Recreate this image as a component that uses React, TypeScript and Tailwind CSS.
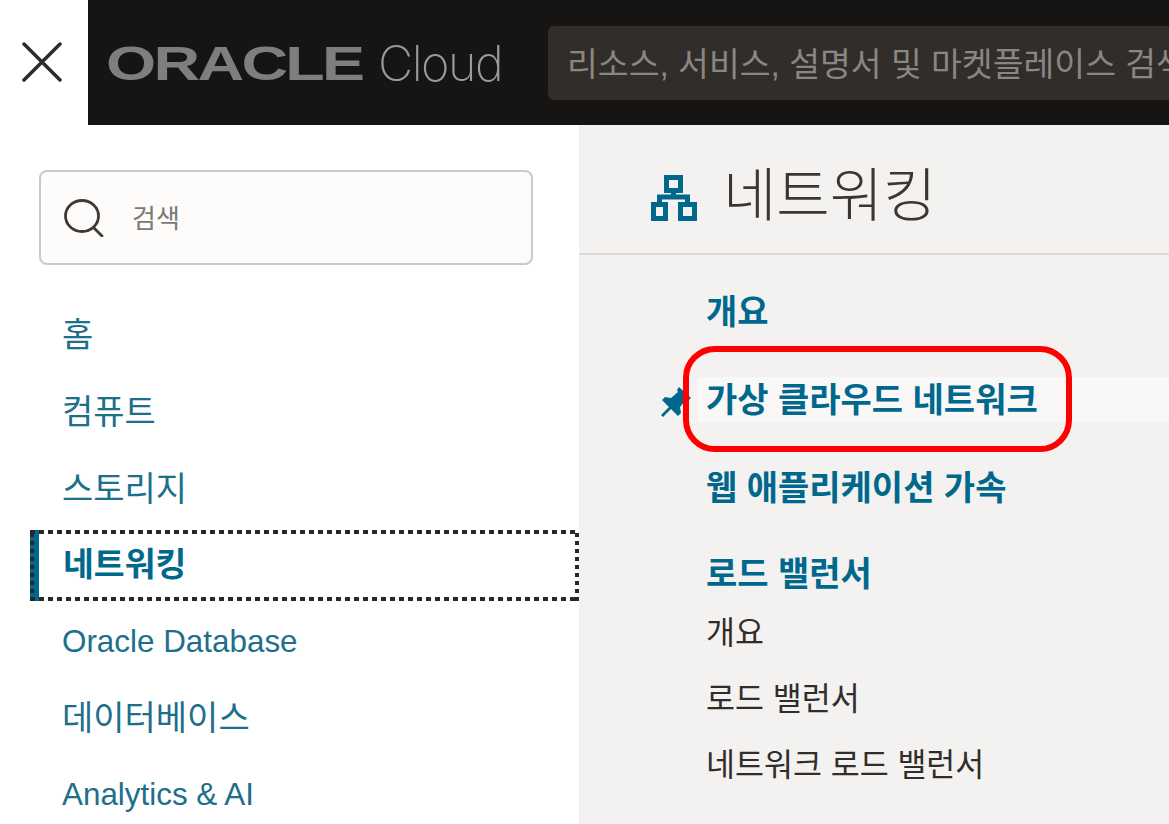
const cjk = "font-['Liberation_Sans','Noto_Sans_CJK_KR',sans-serif]";

const navItems = ['홈', '컴퓨트', '스토리지', '네트워킹', 'Oracle Database', '데이터베이스', 'Analytics & AI'];

const rowLink = `${cjk} pt-[3px] text-[34px] font-bold text-[#00688c]`;
const rowPlain = `${cjk} flex h-[66px] items-center pt-[5px] text-[31.500px] text-[#312d2a]`;

function navTextClass(item: string) {
  if (item === 'Oracle Database') return `${cjk} pb-[1px] text-[31.400px]`;
  if (item === 'Analytics & AI') return `${cjk} pb-[3px] text-[31.400px]`;
  if (item === '데이터베이스') return `${cjk} pb-[2px] text-[34px]`;
  return `${cjk} pt-[2px] text-[34px]`;
}

function NetworkIcon() {
  return (
    <svg viewBox="0 0 46 46" className="mt-[6px] h-[46px] w-[46px] text-[#00688c]" fill="none" stroke="currentColor" strokeWidth="5">
      <rect x="15.500" y="2.500" width="14" height="13" />
      <path d="M22.500 15v7M8.500 28v-6h28v6" />
      <rect x="2.500" y="29.500" width="12" height="14" />
      <rect x="29.500" y="29.500" width="14" height="14" />
    </svg>
  );
}

function CloseIcon() {
  return (
    <svg viewBox="0 0 40 40" className="h-[40px] w-[40px] text-[#2d2a28]" fill="none" stroke="currentColor" strokeWidth="3.500" strokeLinecap="round">
      <path d="M2 2l36 36M38 2L2 38" />
    </svg>
  );
}

function SearchIcon() {
  return (
    <svg viewBox="0 0 40 38" className="h-[38px] w-[40px] text-[#3d3a37]" fill="none" stroke="currentColor" strokeWidth="2.800" strokeLinecap="round">
      <ellipse cx="18" cy="17" rx="16.500" ry="15.500" />
      <path d="M30 29l8 8" />
    </svg>
  );
}

function PinIcon() {
  return (
    <svg viewBox="0 0 30 30" className="absolute top-[10px] left-[-36px] h-[30px] w-[30px] text-[#00688c]" fill="currentColor">
      <path d="M18 0l12 11-3 3-2-1-6 7 1 6-3 3-7-7-8 8-2-2 8-8-7-7 3-3 6 1 7-6-1-2z" />
    </svg>
  );
}

function Header() {
  return (
    <header className="flex h-[125px] overflow-hidden">
      <div className="flex w-[88px] shrink-0 items-center justify-center bg-white pb-[2px] pr-[4px]">
        <CloseIcon />
      </div>
      <div className="flex min-w-0 flex-1 items-center bg-[#161513] pl-[18px]">
        <div className="flex w-[442px] shrink-0 items-center">
          <span className="mt-[2px] w-[272px] origin-left scale-x-[1.345] font-['Liberation_Sans',sans-serif] text-[48px] leading-none font-bold tracking-[-2px] text-[#7e7e7e]">
            ORACLE
          </span>
          <span className="mt-[4px] font-['Inter',sans-serif] text-[48.500px] leading-none font-extralight tracking-[-1.500px] text-[#9a9a9a]">
            Cloud
          </span>
        </div>
        <div className="flex h-[74px] min-w-0 flex-1 items-center overflow-hidden rounded-l-md bg-[#312d2a] pt-[5px] pl-[19px]">
          <span className={`${cjk} text-[33.500px] whitespace-nowrap text-[#8a8682]`}>
            리소스, 서비스, 설명서 및 마켓플레이스 검색
          </span>
        </div>
      </div>
    </header>
  );
}

function Sidebar() {
  return (
    <aside className="w-[579px] shrink-0 bg-white pt-[45px]">
      <div className="ml-[39px] flex h-[95px] w-[494px] items-center rounded-lg border-2 border-[#cdc9c4] bg-[#fdfcfb] pl-[23px]">
        <SearchIcon />
        <span className={`${cjk} ml-[28px] pt-[4px] text-[26px] text-[#7d7974]`}>검색</span>
      </div>
      <nav className="mt-[31px] ml-[30px]">
        {navItems.map((item) =>
          item === '네트워킹' ? (
            <div
              key={item}
              className="my-[3px] flex h-[71px] items-center pl-[33px] [background:repeating-linear-gradient(90deg,#2a2725_0_5px,transparent_5px_9px)_top/100%_4px_no-repeat,repeating-linear-gradient(90deg,#2a2725_0_5px,transparent_5px_9px)_bottom/100%_4px_no-repeat,repeating-linear-gradient(0deg,#2a2725_0_4px,transparent_4px_8px)_left/4px_100%_no-repeat,repeating-linear-gradient(0deg,#2a2725_0_4px,transparent_4px_8px)_right/4px_100%_no-repeat,linear-gradient(#00688c,#00688c)_left/9px_100%_no-repeat]"
            >
              <span className={`${cjk} text-[33.500px] font-bold text-[#00688c]`}>{item}</span>
            </div>
          ) : (
            <div key={item} className="flex h-[77px] items-center pl-[32px] text-[#1d6f8c]">
              <span className={navTextClass(item)}>{item}</span>
            </div>
          ),
        )}
      </nav>
    </aside>
  );
}

function Panel() {
  return (
    <main className="relative min-w-0 flex-1 bg-[#f4f2f0]">
      <div className="flex h-[130px] items-center gap-[26px] border-b-2 border-[#dedbd7] pt-[12px] pl-[72px]">
        <NetworkIcon />
        <h1 className={`${cjk} text-[58px] font-light text-[#3a3633]`}>네트워킹</h1>
      </div>
      <ul className="pt-[12px] pl-[127px]">
        <li className="flex h-[88px] items-center">
          <span className={rowLink}>개요</span>
        </li>
        <li className="flex h-[88px] items-center">
          <div className="relative -ml-[9px] flex h-[45px] flex-1 items-center rounded-l bg-[#f9f8f7] pl-[9px]">
            <PinIcon />
            <span className={rowLink}>가상 클라우드 네트워크</span>
          </div>
        </li>
        <li className="flex h-[88px] items-center">
          <span className={rowLink}>웹 애플리케이션 가속</span>
        </li>
        <li className="mt-[17px] flex h-[50px] items-center">
          <span className={rowLink}>로드 밸런서</span>
        </li>
        <li className={rowPlain}>개요</li>
        <li className={rowPlain}>로드 밸런서</li>
        <li className={rowPlain}>네트워크 로드 밸런서</li>
      </ul>
      <div className="absolute top-[221px] left-[104px] h-[106px] w-[389px] rounded-[32px] border-[6px] border-[#ff0000]" />
    </main>
  );
}

export default function App() {
  return (
    <div className="flex h-[824px] w-[1169px] flex-col overflow-hidden bg-white">
      <Header />
      <div className="flex min-h-0 flex-1">
        <Sidebar />
        <Panel />
      </div>
    </div>
  );
}
